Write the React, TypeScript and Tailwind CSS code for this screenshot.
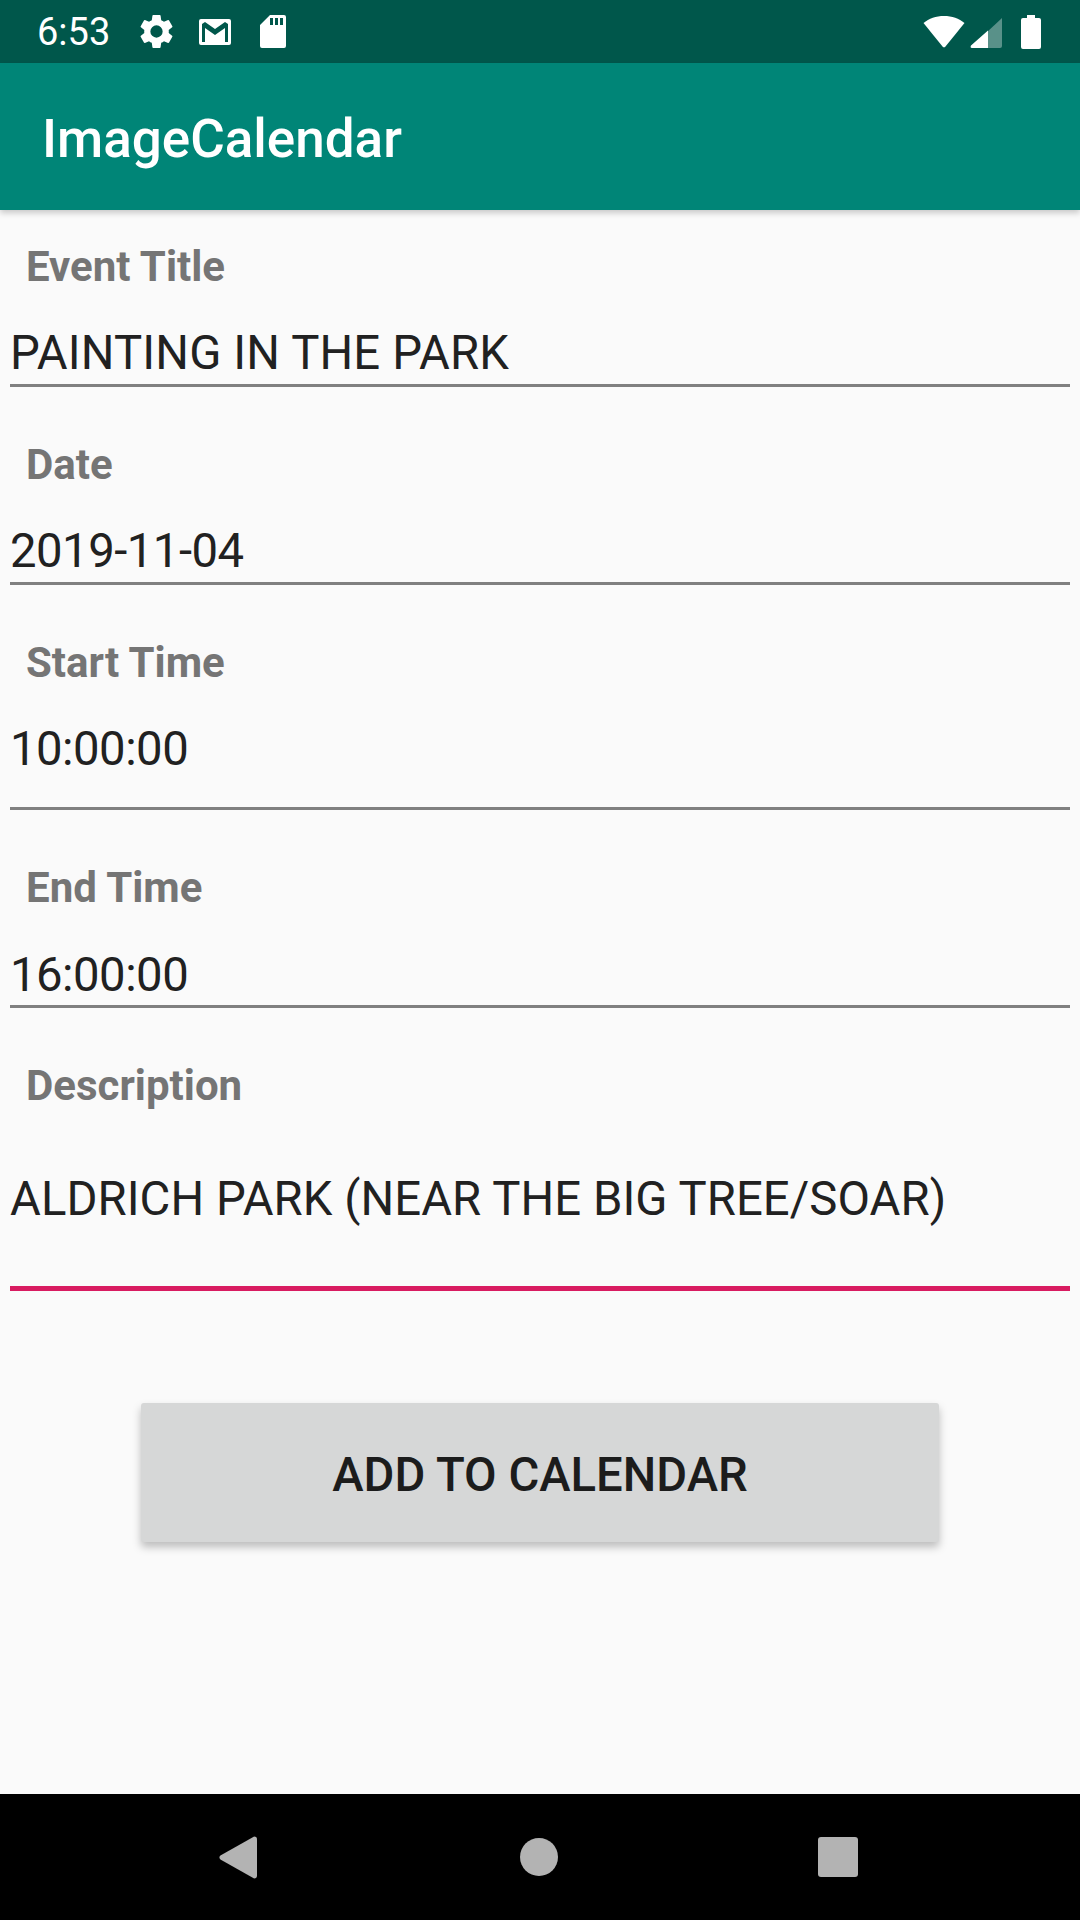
const fields = [
  { label: "Event Title", value: "PAINTING IN THE PARK", box: "h-[97px] pt-[35px] tracking-[0.15px]" },
  { label: "Date", value: "2019-11-04", box: "h-[97px] pt-[35px] tracking-[-0.5px]" },
  { label: "Start Time", value: "10:00:00", box: "h-[124px] pt-[35px] tracking-[-0.5px]" },
  { label: "End Time", value: "16:00:00", box: "h-[97px] pt-[36px] tracking-[-0.5px]" },
];

function StatusIcons() {
  return (
    <div className="ml-[26px] flex items-center">
      <svg viewBox="0 0 24 24" className="h-[41px] w-[41px]" fill="#fff">
        <path d="M19.14 12.94c.04-.3.06-.61.06-.94s-.02-.64-.07-.94l2.03-1.58a.49.49 0 0 0 .12-.61l-1.92-3.32a.49.49 0 0 0-.59-.22l-2.39.96c-.5-.38-1.03-.7-1.62-.94l-.36-2.54a.48.48 0 0 0-.48-.41h-3.84a.48.48 0 0 0-.47.41l-.36 2.54c-.59.24-1.13.57-1.62.94l-2.39-.96a.48.48 0 0 0-.59.22L2.74 8.87a.48.48 0 0 0 .12.61l2.03 1.58c-.05.3-.09.63-.09.94s.02.64.07.94l-2.03 1.58a.49.49 0 0 0-.12.61l1.92 3.32c.12.22.37.29.59.22l2.39-.96c.5.38 1.03.7 1.62.94l.36 2.54c.05.24.24.41.48.41h3.84c.24 0 .44-.17.47-.41l.36-2.54c.59-.24 1.13-.56 1.62-.94l2.39.96c.22.08.47 0 .59-.22l1.92-3.32a.48.48 0 0 0-.12-.61l-2.01-1.58zM12 15.6A3.6 3.6 0 1 1 12 8.4a3.6 3.6 0 0 1 0 7.2z" />
      </svg>
      <svg viewBox="0 0 32 26" className="ml-[22px] h-[26px] w-[32px]" fill="#fff">
        <path fillRule="evenodd" d="M2 0h28a2 2 0 0 1 2 2v22a2 2 0 0 1-2 2H2a2 2 0 0 1-2-2V2a2 2 0 0 1 2-2zM3 5v18h3V9l10 7 10-7v14h3V5l-3-2-10 7L6 3z" />
      </svg>
      <svg viewBox="0 0 26 33" className="ml-[29px] h-[33px] w-[26px]" fill="#fff">
        <path fillRule="evenodd" d="M10 0h14a2 2 0 0 1 2 2v29a2 2 0 0 1-2 2H2a2 2 0 0 1-2-2V10zM10 3v7h3V3zM15 3v7h3V3zM20 3v7h3V3z" />
      </svg>
    </div>
  );
}

function SystemIcons() {
  return (
    <div className="flex items-center">
      <svg viewBox="0 0 42 32" className="h-[32px] w-[42px]" fill="#fff">
        <path d="M21 0C13 0 6 2.600 0.500 7L19.500 30.500a2 2 0 0 0 3 0L41.500 7C36 2.600 29 0 21 0z" />
      </svg>
      <svg viewBox="0 0 32 32" className="ml-[5px] h-[32px] w-[32px]">
        <path d="M32 2v28a2 2 0 0 1-2 2H0z" fill="#fff" fillOpacity="0.35" />
        <path d="M18 14.500V32H2a1.500 1.500 0 0 1-1-2.500z" fill="#fff" />
      </svg>
      <svg viewBox="0 0 20 34" className="ml-[19px] h-[34px] w-[20px]" fill="#fff">
        <path d="M6 0h8v3h4a2 2 0 0 1 2 2v27a2 2 0 0 1-2 2H2a2 2 0 0 1-2-2V5a2 2 0 0 1 2-2h4z" />
      </svg>
    </div>
  );
}

export default function App() {
  return (
    <div className="flex h-[1920px] w-[1080px] flex-col overflow-hidden bg-[#fafafa] font-['Roboto',sans-serif]">
      <div className="flex h-[63px] shrink-0 items-center justify-between bg-[#00574b] pl-[37px] pr-[39px]">
        <div className="flex items-center">
          <span className="text-[38px] leading-[44px] text-white">6:53</span>
          <StatusIcons />
        </div>
        <SystemIcons />
      </div>

      <header className="flex h-[147px] shrink-0 items-center bg-[#008577] px-[42px] pt-[6px] shadow-[0_3px_6px_rgba(0,0,0,0.2)]">
        <h1 className="text-[53px] font-medium leading-none text-white">ImageCalendar</h1>
      </header>

      <main className="flex flex-1 flex-col px-[10px] pt-[34px]">
        {fields.map((f) => (
          <div key={f.label} className="mb-[55px] flex flex-col">
            <label className="h-[46px] pl-[16px] text-[42px] font-bold leading-[46px] text-[#757575]">{f.label}</label>
            <div className={`${f.box} border-b-[3px] border-[#808080] text-[47.25px] leading-[56px] text-[#212121]`}>
              {f.value}
            </div>
          </div>
        ))}

        <label className="h-[46px] pl-[16px] text-[42px] font-bold leading-[46px] text-[#757575]">Description</label>
        <div className="h-[182px] border-b-[5px] border-[#d81b60] pt-[62px] text-[47.25px] leading-[56px] tracking-[0.07px] text-[#212121]">
          ALDRICH PARK (NEAR THE BIG TREE/SOAR)
        </div>

        <button className="mx-auto mt-[112px] flex h-[139px] w-[798px] items-center justify-center rounded-[3px] bg-[#d6d7d7] pt-[6px] text-[47.25px] font-medium text-[#1c1c1c] shadow-[0_5px_8px_rgba(0,0,0,0.25)]">
          ADD TO CALENDAR
        </button>
      </main>

      <nav className="flex h-[126px] shrink-0 items-center bg-black">
        <svg viewBox="0 0 40 44" className="ml-[219px] h-[43px] w-[38px]" fill="#b3b3b3">
          <path d="M37 0a3 3 0 0 1 3 3v38a3 3 0 0 1-3 3L1.500 24a2.500 2.500 0 0 1 0-4z" />
        </svg>
        <div className="ml-[263px] h-[38px] w-[38px] rounded-full bg-[#b3b3b3]" />
        <div className="ml-[260px] h-[40px] w-[40px] rounded-[3px] bg-[#b3b3b3]" />
      </nav>
    </div>
  );
}
